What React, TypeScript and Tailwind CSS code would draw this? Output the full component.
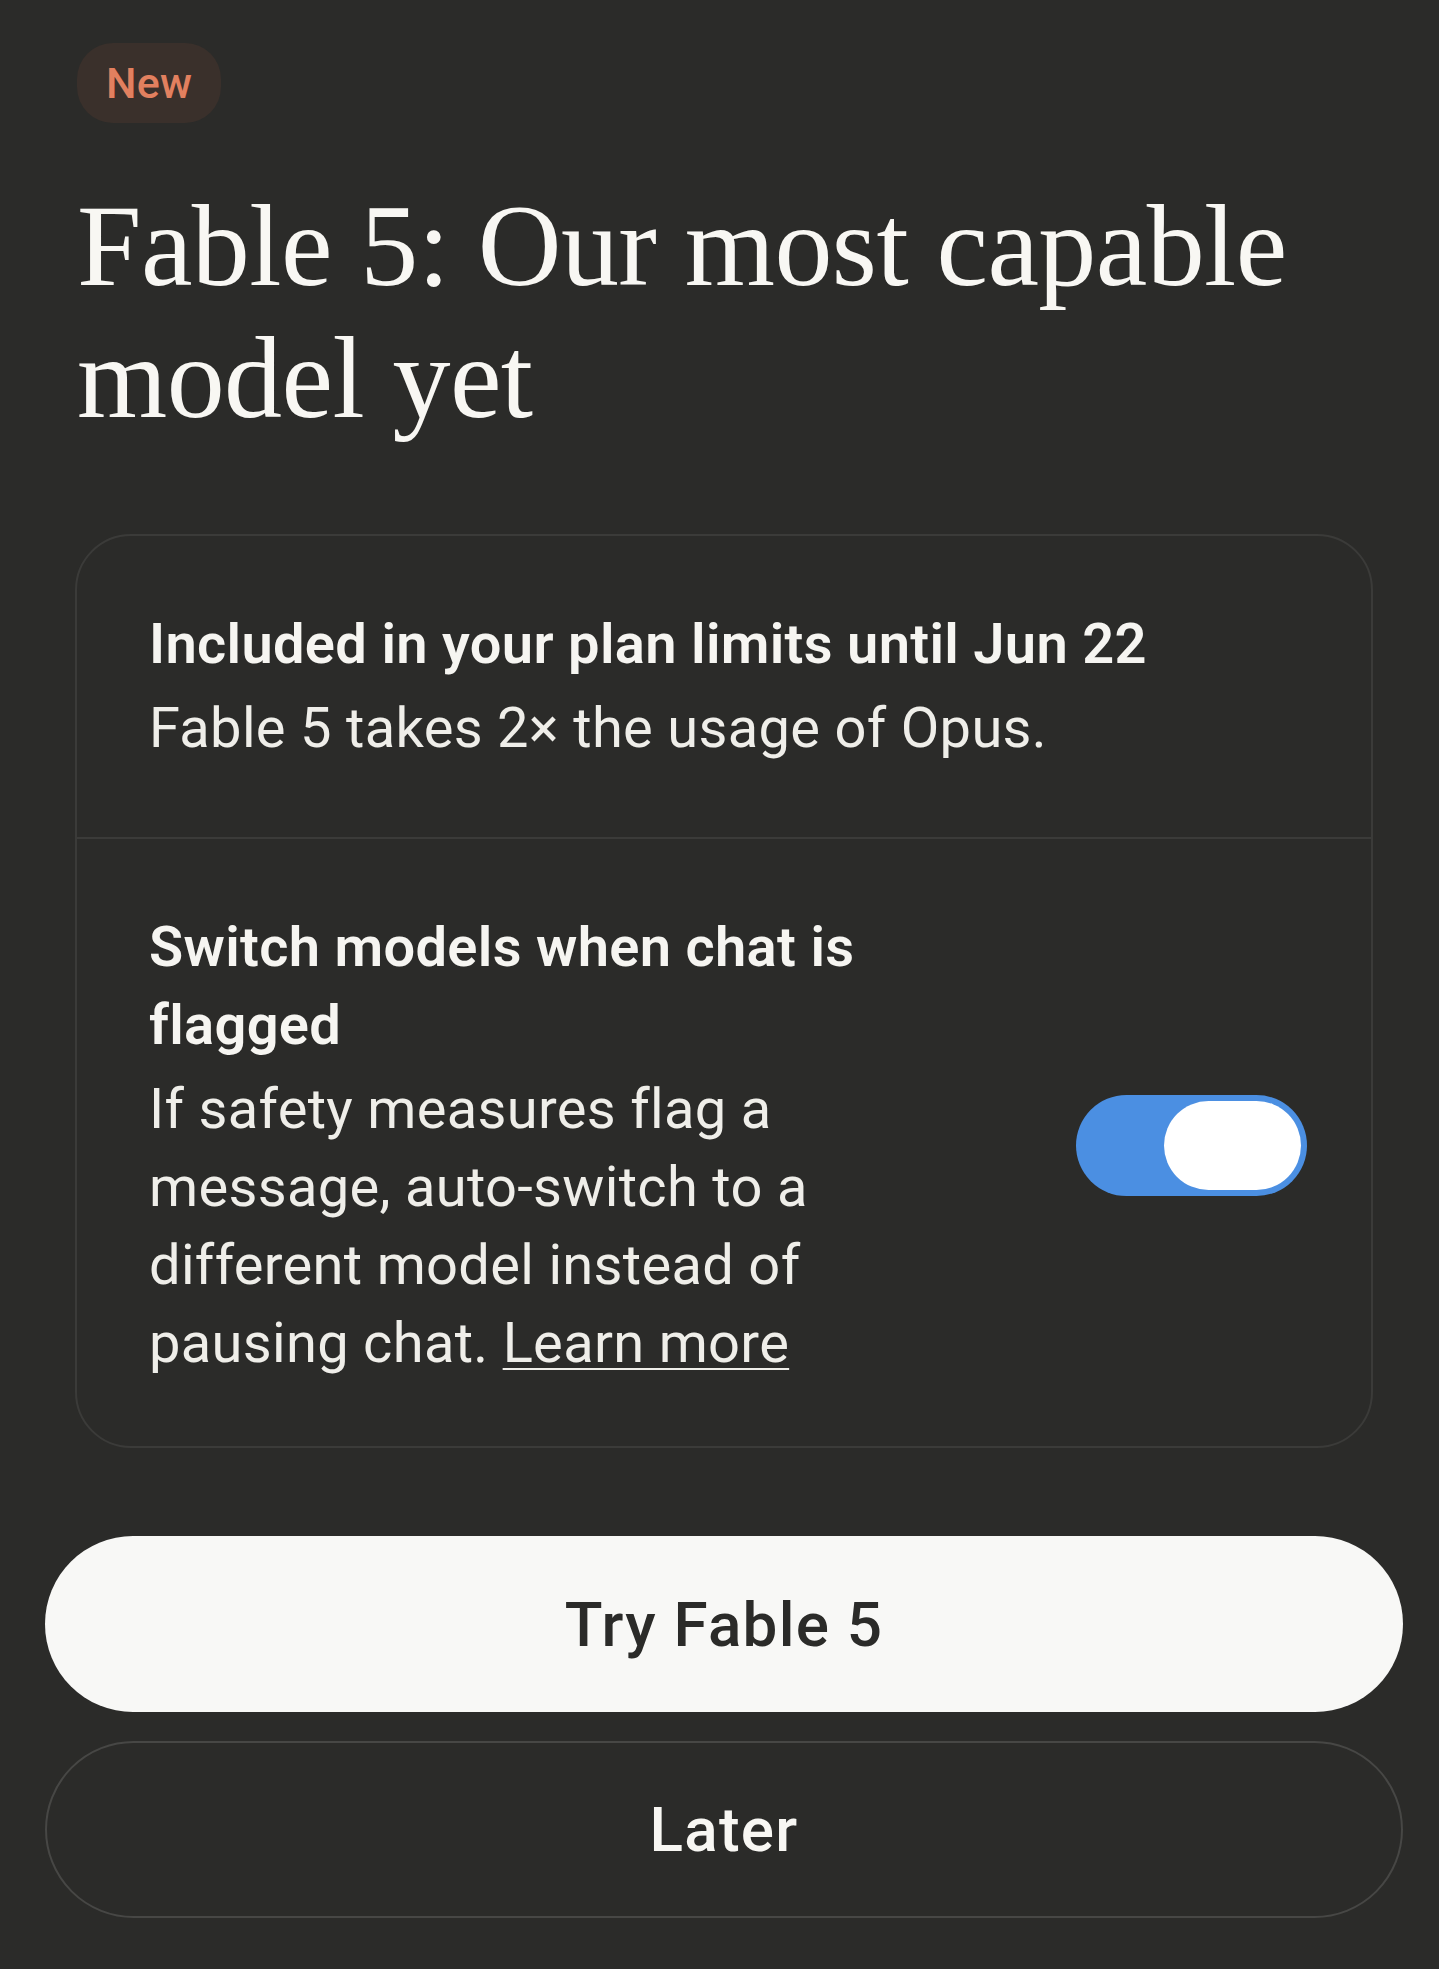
export default function App() {
  return (
    <div className="min-h-screen bg-[#2b2b29] pl-[45px] pr-[36px] pt-[43px] pb-[52px] font-['Roboto',sans-serif] tracking-[0.0125em] text-[#f6f5f1]">
      <div className="px-[32px]">
        <span className="inline-flex h-[80px] items-center rounded-[36px] bg-[#3a302b] px-[29px] text-[43px] font-medium text-[#e2805f]">
          New
        </span>
        <h1 className="mt-[57px] font-['Liberation_Serif',serif] text-[116px] leading-[132px] tracking-[-0.005em] text-[#f8f7f3]">
          Fable 5: Our most capable model yet
        </h1>
      </div>

      <div className="mx-[30px] mt-[90px] rounded-[56px] border-2 border-[#3b3b39] tracking-[0.02em]">
        <div className="pl-[72px] pr-[64px] pt-[69px] pb-[70px]">
          <p className="text-[56px] font-semibold leading-[78px]">Included in your plan limits until Jun 22</p>
          <p className="mt-[6px] text-[56px] leading-[78px] text-[#efeee9]">Fable 5 takes 2× the usage of Opus.</p>
        </div>
        <div className="flex items-center justify-between border-t-2 border-[#3b3b39] pl-[72px] pr-[64px] pt-[69px] pb-[64px]">
          <div className="max-w-[800px]">
            <p className="text-[56px] font-semibold leading-[78px]">Switch models when chat is flagged</p>
            <p className="mt-[6px] text-[56px] leading-[78px] text-[#efeee9]">
              If safety measures flag a message, auto-switch to a different model instead of pausing chat.{" "}
              <a href="#" className="underline decoration-2 underline-offset-[6px]">
                Learn more
              </a>
            </p>
          </div>
          <button
            type="button"
            role="switch"
            aria-checked="true"
            className="flex h-[101px] w-[231px] shrink-0 items-center justify-end rounded-full bg-[#4b8fe2] pr-[6px]"
          >
            <span className="h-[89px] w-[137px] rounded-full bg-white" />
          </button>
        </div>
      </div>

      <div className="mt-[88px] flex flex-col gap-[29px]">
        <button
          type="button"
          className="h-[176px] w-full rounded-full bg-[#f8f8f6] text-[62px] font-medium tracking-[0.02em] text-[#2b2b29]"
        >
          Try Fable 5
        </button>
        <button
          type="button"
          className="h-[177px] w-full rounded-full border-2 border-[#474745] text-[62px] font-medium tracking-[0.02em] text-[#f8f7f3]"
        >
          Later
        </button>
      </div>
    </div>
  );
}
